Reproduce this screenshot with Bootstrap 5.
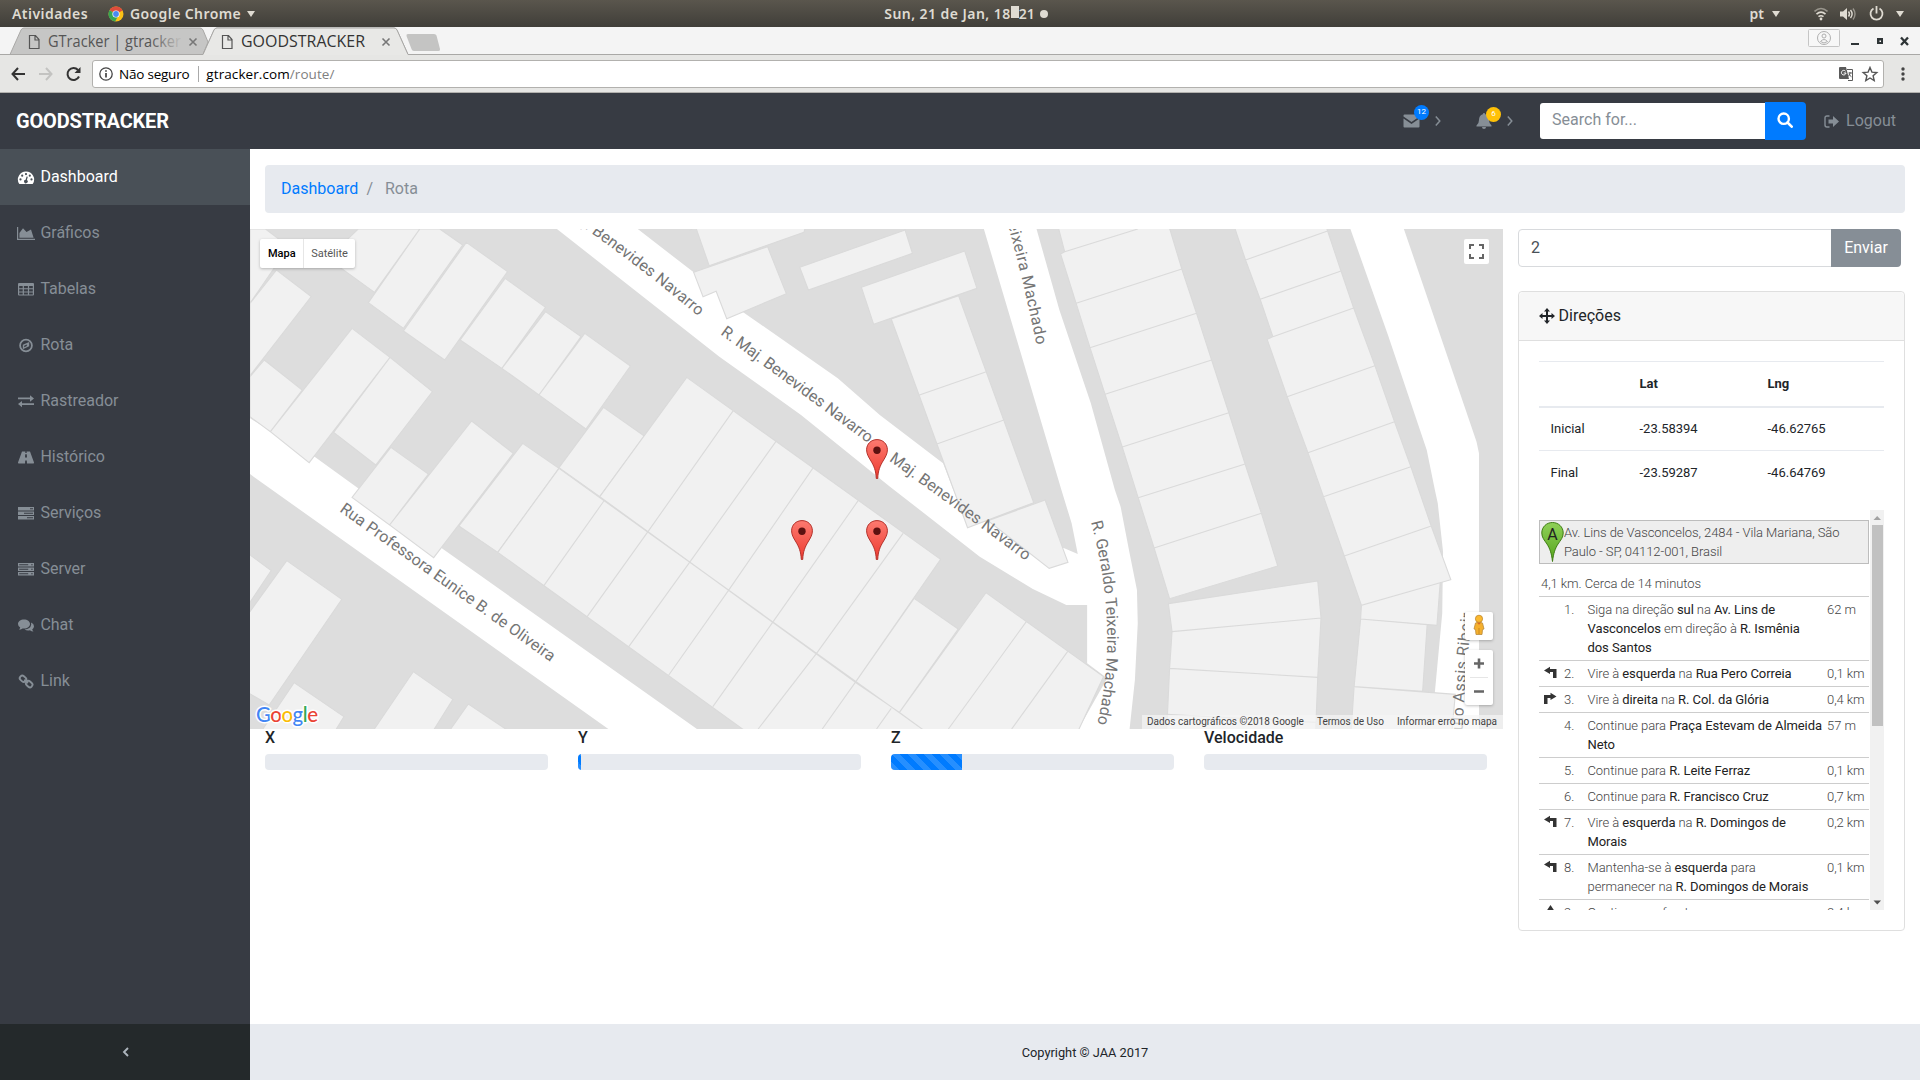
<!DOCTYPE html>
<html lang="pt">
<head>
<meta charset="utf-8">
<title>GOODSTRACKER</title>
<link rel="stylesheet" href="https://cdn.jsdelivr.net/npm/bootstrap@5.3.0/dist/css/bootstrap.min.css">
<style>
:root{--dark:#373b43;--muted:#868e96;--soft:#e7eaef;--blue:#007bff}
body{font-family:Roboto,"Liberation Sans",sans-serif;font-size:16px;line-height:1.5;color:#212529;height:1080px;overflow:hidden;background:#fff}
svg{display:block;flex:none}
.ico{width:18px;height:16px;fill:currentColor}
/* desktop panel */
.panel{height:27px;background:linear-gradient(#5a564d,#403e39);color:#dfdbd2;font:600 14px/27px "Noto Sans","Open Sans",sans-serif;padding:0 12px}
.panel>div{height:27px}
.tri{width:0;height:0;border:4.5px solid transparent;border-top:6px solid #dfdbd2;border-bottom:0}
.colonbox{width:8px;height:12px;background:#dfdbd2;margin-bottom:4px}
.tabstrip{height:28px;background:#f4f4f4}
.tabstrip text{font-family:"Open Sans","Noto Sans",sans-serif;font-size:15.5px}
.toolbar{height:38px;background:#e6e6e4;border-bottom:1px solid #b2b1ae;padding:5px 10px 5px 11px}
.omni{height:28px;background:#fff;border:1px solid #b2b1ae;border-radius:3px;font:13.5px/26px "Open Sans","Noto Sans",sans-serif;color:#000}
/* application shell */
.topnav{height:56px;background:var(--dark);color:var(--muted);padding:0 24px 0 16px}
.brandname{font-size:20px;font-weight:700;color:#fff;letter-spacing:-.17px}
.pill{position:absolute;top:-9px;left:11px;width:15px;height:15px;border-radius:50%;color:#fff;font-size:8px;line-height:14px;text-align:center}
.searchbox{width:266px}
.searchbox .form-control{height:36px;margin:1px 0;border:0;border-radius:3px 0 0 3px;padding:0 12px 3px;box-shadow:none}
.searchbox .form-control::placeholder{color:#868e96}
.searchbox .btn{width:41px;height:38px;background:var(--blue);color:#fff;border:0;border-radius:0 4px 4px 0;padding:0 2px 2px 0}
.sidebar{width:250px;background:var(--dark)}
.sidebar .nav-link{height:56px;padding:0 0 1px 17px;color:var(--muted);gap:5.4px}
.sidebar .nav-link.active{background:#495057;color:#fff}
.toggler{height:56px;background:#24292b;color:#adb5bd}
.crumbs{height:48px;margin:16px 15px;padding:0 16px;background:var(--soft);border-radius:4px;color:var(--muted)}
.crumbs a{color:var(--blue);text-decoration:none}
.mapcol{width:1253px}
.sidecol{width:402px;padding:0 15px}
.mapbox{height:500px;background:#ddd}
.mapbox text{font-family:Roboto,sans-serif;font-size:16px;fill:#757575}
.ctl{position:absolute;background:#fff;border-radius:2px;box-shadow:0 1px 3px rgba(0,0,0,.25)}
.maptypes{left:10px;top:10px;height:29px;font-size:11px;line-height:29px;color:#565656}
.maptypes span{padding:0 7.5px 0 8px}
.maptypes span:first-child{color:#000;font-weight:500;border-right:1px solid #e6e6e6}
.maptypes span:last-child{padding-left:7px}
.fullscr{right:14px;top:10px;width:25px;height:25px;box-shadow:none}
.pegman{right:10px;bottom:89px;width:28px;height:28px}
.zoomer{right:10px;bottom:24px;width:28px;height:55px}
.legal{position:absolute;right:0;bottom:0;height:14px;background:rgba(245,245,245,.7);font-size:10px;line-height:13px;color:#444;padding:0 6px 0 5px;gap:13px;white-space:nowrap}
.gauge{padding:0 15px}
.gauge h6{font-size:16px;line-height:17.6px;margin-bottom:7.4px}
.progress{height:16px;background:var(--soft);border-radius:4px}
.progress-bar{background-color:var(--blue)}
.sendbox{height:38px;width:383px;margin-bottom:24px}
.sendbox .form-control{border:1px solid #d8dadd;border-radius:4px 0 0 4px;color:#495057;padding:0 12px 2px;height:38px}
.sendbox .btn{background:#868e96;color:#fff;border:0;border-radius:0 4px 4px 0;width:70px;padding:0}
.routecard{height:640px;border:1px solid #dfdfdf;border-radius:4px;width:387px}
.routecard .card-header{height:49px;background:#f7f7f7;border-color:#dfdfdf;padding:0 20px 1px 19.5px;gap:4px}
.routecard .card-body{padding:20px 20px 19px}
.coords{font-size:13px;margin:0 0 15px;color:#212529;width:345px}
.coords td,.coords th{height:44px;padding:0 0 0 11.5px;vertical-align:middle;border:0;border-top:1px solid var(--soft);background:none}
.coords thead th{border-bottom:2px solid var(--soft);height:45px;font-weight:700}
.coords tbody tr:first-child td{border-top:0}
.guide{height:400px;font-size:13px;font-weight:300;line-height:19px;color:#444;letter-spacing:-.07px}
.guide b{font-weight:400;color:#222}
.steps{width:330px;margin-right:1px}
.origin{margin-top:10px;height:44px;background:#eee;border:1px solid #bdbdbd;padding:2px 0 0 1px;gap:0}
.origin svg{margin-top:-1px}
.total{padding:10px 2px 2px;height:32px}
.leg{border-top:1px solid #cdcdcd;padding:3px 0}
.leg .turn{width:24px;padding:2px 0 0 5px;fill:#333}
.leg .num{width:24.5px;padding-left:1px}
.leg .dist{width:42px;white-space:nowrap}
.leg .say{width:239.5px;padding-right:3px}
.bar{width:14px;background:#f1f1f1}
.thumb{width:11px;height:201px;background:#c1c1c1}
.pagefoot{height:56px;background:var(--soft);font-size:12.8px;padding-top:2px}
</style>
<script src="https://cdn.jsdelivr.net/npm/bootstrap@5.3.0/dist/js/bootstrap.bundle.min.js"></script>
</head>
<body class="d-flex flex-column">
<svg width="0" height="0" class="position-absolute">
<defs>
<linearGradient id="pinfill" x1="0" y1="0" x2="0" y2="1"><stop offset="0" stop-color="#fc7a70"/><stop offset="1" stop-color="#ee3b30"/></linearGradient>
<linearGradient id="greenfill" x1="0" y1="0" x2="0" y2="1"><stop offset="0" stop-color="#8fd058"/><stop offset="1" stop-color="#55a51c"/></linearGradient>
<linearGradient id="fade" x1="0" x2="1"><stop offset="0" stop-color="#c6c6c5" stop-opacity="0"/><stop offset="1" stop-color="#c6c6c5"/></linearGradient>
<symbol id="pin" viewBox="0 0 22 40"><path d="M11 .6C5 .6.6 5 .6 10.800c0 4 1.800 7 4.400 11.200 3 5 4.900 9.500 5.300 17.500h1.400c.4-8 2.300-12.500 5.300-17.500 2.600-4.200 4.400-7.200 4.400-11.200C21.400 5 17 .6 11 .6z" fill="url(#pinfill)" stroke="#b3312a"/><circle cx="11" cy="11.300" r="3.700" fill="#5c1110"/></symbol>
<symbol id="left" viewBox="0 0 14 14"><path d="M0 4.500 6 .8v2.200h6.500V12H9V6H6v2z"/></symbol>
<symbol id="right" viewBox="0 0 14 14"><path d="M12.500 4.500 6.500.8v2.200H0V12h3.500V6h3v2z"/></symbol>
<symbol id="ahead" viewBox="0 0 14 14"><path d="M6.500 0 10.500 6H8v8H5V6H2.500z"/></symbol>
</defs></svg>

<div class="panel d-flex align-items-center position-relative">
  <div class="d-flex align-items-center"><span style="letter-spacing:.45px">Atividades</span>
    <svg width="16" height="16" viewBox="0 0 16 16" style="margin:0 6px 0 20px"><circle cx="8" cy="8" r="7.500" fill="#fbc116"/><path d="M8 8 1.500 4.200A7.500 7.500 0 0 1 14.600 4.500z" fill="#de4c3c"/><path d="M8 8 1.500 4.200A7.500 7.500 0 0 0 7.200 15.500L10 10z" fill="#37a554"/><circle cx="8" cy="8" r="3.600" fill="#fff"/><circle cx="8" cy="8" r="2.900" fill="#4a89f0"/></svg>
    <span style="letter-spacing:.4px">Google Chrome</span><i class="tri" style="margin-left:6px"></i></div>
  <div class="position-absolute top-0 start-0 w-100 d-flex justify-content-center align-items-center" style="padding-left:12px"><span style="letter-spacing:.45px">Sun, 21 de Jan, 18</span><i class="colonbox"></i><span>21</span><svg width="8" height="8" style="margin-left:5px"><circle cx="4" cy="4" r="4" fill="#dfdbd2"/></svg></div>
  <div class="d-flex align-items-center ms-auto"><span>pt</span><i class="tri" style="margin:0 34px 0 8px"></i>
    <svg width="14" height="14" viewBox="0 0 14 14" fill="none" stroke="#dfdbd2" stroke-width="1.600"><path d="M.5 4.500q6.500-6 13 0" opacity=".5"/><path d="M2.500 7.200q4.500-4 9 0M4.500 9.700q2.500-2 5 0"/><circle cx="7" cy="12" r="1.400" fill="#dfdbd2" stroke="none"/></svg>
    <svg width="16" height="14" viewBox="0 0 16 14" style="margin:0 13px 0 12px" fill="none" stroke="#dfdbd2" stroke-width="1.400"><path d="M0 4.500h3l4-3.500v12L3 9.500H0z" fill="#dfdbd2" stroke="none"/><path d="M8.500 4.500q2 2.500 0 5M10.500 3q3.200 4 0 8"/><path d="M13 1.500q4 5.500 0 11" opacity=".5"/></svg>
    <svg width="15" height="15" viewBox="0 0 15 15" fill="none" stroke="#dfdbd2" stroke-width="1.800"><path d="M4.500 2.500a6 6 0 1 0 6 0M7.500 0v7.500"/></svg><i class="tri" style="margin:0 4px 0 12px"></i></div>
</div>

<div class="tabstrip">
<svg width="1920" height="28" viewBox="0 27 1920 28">
  <path d="M10 54.500 21 30q1-2 3-2H200q2 0 3 2L208 42 203 54.500z" fill="#c6c6c5" stroke="#a9a8a6"/>
  <path d="M0 54.500H203L214 30q1-2 3-2H394q2 0 3 2L408 54.500H1920" fill="none" stroke="#a9a8a6"/>
  <path d="M203 55 214 30q1-2 3-2H394q2 0 3 2L408 55z" fill="#e8e8e6"/>
  <path d="M203 54.500 214 30q1-2 3-2H394q2 0 3 2L408 54.500" fill="none" stroke="#a9a8a6"/>
  <path d="M408 34H434q2 0 2.500 1.500L440 49q.5 2-1.500 2H414q-2 0-2.500-2L406.500 36q-.5-2 1.500-2z" fill="#c4c4c3"/>
  <g fill="none" stroke="#555" stroke-width="1.200"><path d="M29.500 35.500h6l3.500 4v9h-9.500zM35 35.500v4.500h4M222.500 35.500h6l3.500 4v9h-9.500zM228 35.500v4.500h4"/><path d="M189.500 38.500l7 7m0-7-7 7M382.500 38.500l7 7m0-7-7 7" stroke="#777" stroke-width="1.600"/></g>
  <text x="48" y="47" fill="#555" textLength="133" lengthAdjust="spacingAndGlyphs">GTracker | gtracker</text>
  <rect x="150" y="31" width="33" height="21" fill="url(#fade)"/>
  <text x="241" y="47" fill="#333" textLength="124" lengthAdjust="spacingAndGlyphs">GOODSTRACKER</text>
  <rect x="1808.500" y="29.500" width="31" height="17" fill="#f7f7f7" stroke="#c5c5c5" rx="1"/>
  <g fill="none" stroke="#b0b0b0"><circle cx="1824" cy="38" r="6.500"/><circle cx="1824" cy="36" r="2"/><path d="M1820.500 41.500q3.500-4 7 0-3.500 3-7 0z"/></g>
  <path d="M1851 43h8v2h-8zM1877 38h6v6h-6z" fill="#2e3436"/><path d="M1879.500 40.500h1.500v1.500h-1.500z" fill="#fff"/>
  <path d="m1901 37.500 7 7.500m0-7.500-7 7.500" stroke="#2e3436" stroke-width="2.300"/>
</svg></div>

<div class="toolbar d-flex align-items-center">
  <svg width="70" height="16" viewBox="0 0 70 16" fill="none" stroke-width="2"><path d="M7 2 1.500 8 7 14M1.500 8H14" stroke="#333"/><path d="M35 2l5.500 6-5.500 6M40.500 8H28" stroke="#c3c3c1"/><path d="M68 10.500A6 6 0 1 1 67 4" stroke="#333"/><path d="M69.500 1v6h-6z" fill="#333"/></svg>
  <div class="omni d-flex align-items-center flex-grow-1" style="margin:0 12px 0 11px;padding:0 6px">
    <svg width="14" height="14" viewBox="0 0 14 14" fill="none" stroke="#444" stroke-width="1.300"><circle cx="7" cy="7" r="6.200"/><path d="M7 6v4.500M7 3.200v1.600" stroke-width="1.700"/></svg>
    <span style="margin-left:6px;letter-spacing:-.22px">Não seguro</span><i style="width:1px;height:16px;background:#aaa;margin:0 7px 0 9px"></i><span style="letter-spacing:.08px">gtracker.com<span style="color:#808080">/route/</span></span>
    <svg class="ms-auto" width="14" height="14" viewBox="0 0 14 14"><path d="M0 1q0-1 1-1h6l3 12H1q-1 0-1-1z" fill="#5a5a5a"/><path d="M6.500 4.200A2.300 2.300 0 1 0 7 6H4.700" fill="none" stroke="#fff"/><path d="M8 2.500h5.500v11H9M9.500 6h3.500M11 5v1q0 2-2 3.500M10 7q1 2 2.500 2.800" fill="none" stroke="#5a5a5a"/></svg>
    <svg class="ms-2" style="margin-right:-2px" width="18" height="16" viewBox="0 0 18 16"><path d="m9 1.500 1.900 4.600 4.900.4-3.700 3.200 1.100 4.900L9 12l-4.200 2.600 1.100-4.900L2.200 6.500l4.900-.4z" fill="none" stroke="#555" stroke-width="1.400"/></svg>
  </div>
  <svg width="14" height="14" viewBox="0 0 14 14" fill="#444"><circle cx="7" cy="2" r="1.700"/><circle cx="7" cy="7" r="1.700"/><circle cx="7" cy="12" r="1.700"/></svg>
</div>

<nav class="topnav d-flex align-items-center">
  <span class="brandname me-auto">GOODSTRACKER</span>
  <div class="position-relative d-flex align-items-center" style="margin-right:35px">
    <svg width="17" height="14" viewBox="0 0 17 14" fill="currentColor"><path d="M.5 1.500Q.5.500 1.500.500h14q1 0 1 1v1L8.500 8 .5 2.500zM.5 4.500 8.500 10l8-5.500v8q0 1-1 1h-14q-1 0-1-1z"/></svg>
    <span class="pill" style="background:#007bff">12</span>
    <svg style="margin-left:15px" width="6" height="10" fill="none" stroke="currentColor" stroke-width="1.500"><path d="m.8.500 4 4.500-4 4.500"/></svg></div>
  <div class="position-relative d-flex align-items-center" style="margin-right:27px">
    <svg width="16" height="16" viewBox="0 0 16 16" fill="currentColor"><path d="M8 0q1 0 1.200 1.200Q13 2.200 13 7q0 3.500 2.500 5.500v1H.5v-1Q3 10.500 3 7q0-4.800 3.800-5.800Q7 0 8 0zM6 14h4q0 2-2 2t-2-2z"/></svg>
    <span class="pill" style="background:#ffc107;left:10px;top:-6px">6</span>
    <svg style="margin-left:15px" width="6" height="10" fill="none" stroke="currentColor" stroke-width="1.500"><path d="m.8.500 4 4.500-4 4.500"/></svg></div>
  <div class="input-group searchbox flex-nowrap" style="margin-right:18px"><input class="form-control" placeholder="Search for..."><button class="btn d-flex align-items-center justify-content-center"><svg width="16" height="16" viewBox="0 0 16 16" fill="none" stroke="currentColor"><circle cx="6.700" cy="6.700" r="5.200" stroke-width="2.400"/><path d="m10.500 10.500 4.200 4.200" stroke-width="2.600" stroke-linecap="round"/></svg></button></div>
  <svg width="15" height="13" viewBox="0 0 15 13" class="me-2" style="margin-right:7px!important"><path d="M5.500 1H3Q1 1 1 3v7q0 2 2 2h2.500" fill="none" stroke="currentColor" stroke-width="1.400"/><path d="M4.500 4.500H9V1l6 5.500L9 12V8.500H4.500z" fill="currentColor"/></svg><span>Logout</span>
</nav>

<div class="d-flex flex-grow-1">
  <aside class="sidebar d-flex flex-column">
    <nav class="nav flex-column flex-nowrap flex-grow-1">
      <a class="nav-link active d-flex align-items-center"><svg class="ico" viewBox="0 0 18 16"><path fill-rule="evenodd" d="M9 2.500a8 8 0 0 1 7 12q-.3.500-1 .500H3q-.7 0-1-.5a8 8 0 0 1 7-12zM3.500 9.300a1.100 1.100 0 1 0 0 2.200 1.100 1.100 0 0 0 0-2.200zM5.200 5.600a1.100 1.100 0 1 0 0 2.200 1.100 1.100 0 0 0 0-2.200zM9 4a1.100 1.100 0 1 0 0 2.200A1.100 1.100 0 0 0 9 4zm3.800 1.600a1.100 1.100 0 1 0 0 2.200 1.100 1.100 0 0 0 0-2.200zm1.700 3.700a1.100 1.100 0 1 0 0 2.200 1.100 1.100 0 0 0 0-2.200zM9.600 7.500l-1 3.200a1.800 1.800 0 1 0 1.300.3l.9-3.300z"/></svg>Dashboard</a>
      <a class="nav-link d-flex align-items-center"><svg class="ico" viewBox="0 0 18 16"><path d="M0 2h1.200v11.800H18V15H0zM2.400 12.800V8L6 3.300 9.500 7 14 4.500l2.600 8.300z"/></svg>Gráficos</a>
      <a class="nav-link d-flex align-items-center"><svg class="ico" viewBox="0 0 18 16"><path fill-rule="evenodd" d="M2 2h14q1 0 1 1v10.500q0 1-1 1H2q-1 0-1-1V3q0-1 1-1zm.2 3v2.300h3.500V5zm4.700 0v2.300h4V5zm5.200 0v2.300h3.700V5zM2.200 8.300v2.200h3.500V8.300zm4.700 0v2.200h4V8.300zm5.200 0v2.200h3.700V8.300zM2.200 11.500v2h3.500v-2zm4.700 0v2h4v-2zm5.200 0v2h3.700v-2z"/></svg>Tabelas</a>
      <a class="nav-link d-flex align-items-center"><svg class="ico" viewBox="0 0 18 16"><circle cx="9" cy="8.500" r="5.900" fill="none" stroke="currentColor" stroke-width="1.800"/><path fill-rule="evenodd" d="M12.200 5v4.300l-6.400 3V7.800zM7.200 8.700v1.600L9.800 9V7.500z"/></svg>Rota</a>
      <a class="nav-link d-flex align-items-center"><svg class="ico" viewBox="0 0 18 16"><path d="M1 4.500h12V2.200l4 3.300-4 3.200V6.300H1zM17 10.200v1.800H5v2.300L1 11.100 5 8v2.200z"/></svg>Rastreador</a>
      <a class="nav-link d-flex align-items-center"><svg class="ico" viewBox="0 0 18 16"><path fill-rule="evenodd" d="M5 2.500h3.400L8.300 4h1.400l-.1-1.500H13L17 13.500q.3 1-.8 1H10l-.2-3H8.200l-.2 3H1.800q-1 0-.8-1zM8.200 5.200 8 8.500h2l-.2-3.300z"/></svg>Histórico</a>
      <a class="nav-link d-flex align-items-center"><svg class="ico" viewBox="0 0 18 16"><path fill-rule="evenodd" d="M1 2h16v3.500H1zm12 1.200v1.100h3V3.200zM1 6.500h16V10H1zm6 1.200v1.100h9V7.700zM1 11h16v3.500H1zm9 1.200v1.100h6v-1.100z"/></svg>Serviços</a>
      <a class="nav-link d-flex align-items-center"><svg class="ico" viewBox="0 0 18 16"><path fill-rule="evenodd" d="M1 2h16v3.500H1zm1.200 1.200v1.100h9V3.200zm12 0v1.100h1.500V3.200zM1 6.500h16V10H1zm1.200 1.200v1.100h9V7.700zm12 0v1.100h1.500V7.700zM1 11h16v3.500H1zm1.200 1.200v1.100h9v-1.100zm12 0v1.100h1.500v-1.100z"/></svg>Server</a>
      <a class="nav-link d-flex align-items-center"><svg class="ico" viewBox="0 0 18 16"><path d="M7 2.500c3.400 0 6 2 6 4.500s-2.600 4.500-6 4.500l-1.400-.1Q3.800 12.600 2 12.600q1.200-1 1.200-2.100Q1 9.200 1 7c0-2.500 2.600-4.500 6-4.500zM14 5.500q3 1.300 3 3.700 0 1.900-1.800 3.200.2 1.100 1.300 2-2 0-3.600-1.200-3.100.6-5.300-.7Q13.500 12 14.200 7.500z"/></svg>Chat</a>
      <a class="nav-link d-flex align-items-center"><svg class="ico" viewBox="0 0 18 16" style="fill:none;stroke:currentColor;stroke-width:1.900"><rect x="-3.200" y="-2.300" width="6.800" height="5" rx="2.300" transform="translate(6 5.500) rotate(42)"/><rect x="-3.600" y="-2.600" width="6.800" height="5" rx="2.300" transform="translate(12.300 11.300) rotate(42)"/><path d="m7.300 6.800 3.600 3.300"/></svg>Link</a>
    </nav>
    <div class="toggler d-flex align-items-center justify-content-center"><svg width="7" height="10" fill="none" stroke="currentColor" stroke-width="1.900"><path d="M6 1 2 5l4 4"/></svg></div>
  </aside>

  <div class="d-flex flex-column flex-grow-1">
    <div class="crumbs d-flex align-items-center"><a href="#">Dashboard</a><span style="margin:0 12px 0 8px">/</span><span>Rota</span></div>
    <div class="d-flex flex-grow-1">
      <div class="mapcol">
        <div class="mapbox position-relative overflow-hidden">
<svg width="1253" height="500" viewBox="0 0 1253 500">
<g transform="scale(.408163 .333333) translate(0 -27)">
<g fill="#fff">
<path d="M752 27 1150 410 1350 585 1568 800 1788 1010 1918 1107 2000 1155H2051V1330L2100 1375 2030 1527H2155L2168 1380 2175 1210 2173 1110 2155 1000 2133 860 2119 810 2060 550 1983 270 1927 27H1798L1988 810 2013 910 2028 1002 1995 985 1808 902 1758 920 1698 730 1543 585 1440 475 1210 278 1087 157 950 27z"/>
<path d="M2696 27 2788 345 2883 690 2903 810 2910 850 2923 995 2921 1180 2903 1416 2930 1527H3011V700L3005 665 2888 245 2827 27z"/>
<path d="M0 595 160 712 265 805 470 985 1095 1527H878L20 780 0 762z"/>
</g>
<g fill="#f1f1f1" stroke="#dadada" stroke-width="1.100">
<path vector-effect="non-scaling-stroke" d="M0 27H38L95 80 0 250zM65 150 150 230 0 467V250zM35 420 128 510 50 635 0 590V470zM250 325 343 412 145 728 50 635zM343 412 447 515 308 735 205 637zM345 682 437 762 342 915 250 832zM543 603 645 700 450 1013 342 915zM668 670 757 745 607 997 512 918zM265 27H416L305 217 190 115zM416 27H465L521 75 376 325 290 248zM530 67 631 155 477 420 376 333zM625 175 724 262 617 445 515 360zM724 275 811 350 708 525 617 445zM820 340 932 438 823 627 708 525zM866 562 966 648 857 830 757 743z"/>
<path vector-effect="non-scaling-stroke" d="M1070 472 1692 1018 1483 1387 857 830zM1184 572 975 935M1290 662 1077 1027M1380 743 1172 1112M1490 842 1280 1208M1600 940 1388 1300M1627 1135 1735 1227 1591 1477 1483 1387zM1803 1118 2091 1370 2030 1530H1650L1591 1477zM1902 1205 1711 1527M2003 1295 1866 1527M757 745 1650 1530H1210L607 997zM867 843 720 1097M975 935 826 1190M1077 1027 928 1280M1172 1112 1026 1365M1280 1208 1134 1460M1388 1300 1245 1527M1483 1387 1402 1527M1571 1465 1535 1527"/>
<path vector-effect="non-scaling-stroke" d="M-2 1003 52 1052-2 1150zM90 1022 225 1138 47 1455-2 1420V1178zM108 1388 230 1490 210 1530H30zM400 1355 497 1438 450 1530H303zM535 1452 630 1530H490z"/>
<path vector-effect="non-scaling-stroke" d="M1078 31 1086 24M1093 25H1360L1357 37 1125 137zM1087 157 1268 80 1314 221 1168 296 1142 214 1110 230zM1347 142 1605 30 1623 100 1368 210zM1498 202 1751 93 1781 205 1528 313zM1571 297 1736 227 1920 848 1758 923zM1640 525 1804 455M1683 672 1847 600M1808 902 1948 840 2004 1027 1958 1045z"/>
<path vector-effect="non-scaling-stroke" d="M1981 25H2253L2283 147 2319 280 2356 420 2398 578 2438 732 2478 880 2518 1038 2253 1136 2215 984 2176 833 2137 681 2095 523 2058 383 2024 250 1986 102 1996 95zM1996 95 2175 27M2024 250 2283 147M2058 383 2319 280M2095 523 2356 420M2137 681 2398 578M2176 833 2438 732M2215 984 2478 880M2250 1151 2616 1083 2624 1194 2616 1372 2611 1530H2246L2253 1345 2259 1235zM2259 1235 2624 1194M2253 1345 2616 1372M2246 1483 2611 1507"/>
<path vector-effect="non-scaling-stroke" d="M2413 25H2638L2673 153 2704 264 2756 437 2804 605 2844 740 2894 918 2942 1079 2723 1156 2681 1008 2630 830 2592 698 2541 530 2492 358 2506 350 2475 238 2439 120zM2439 120 2640 33M2475 238 2673 153M2506 350 2704 264M2541 530 2756 437M2592 698 2804 605M2630 830 2844 740M2681 1008 2894 918M2723 1156 2916 1088 2908 1216 2721 1197zM2721 1197 2884 1214 2873 1414 2705 1400zM2705 1400 2953 1423 2945 1530H2698z"/>
</g></g>
<defs>
<path id="st1" d="M297-27 Q374 25 448 87"/><path id="st2" d="M470 105 Q547 161 619 215"/><path id="st3" d="M624 221 Q701 276 777 333"/>
<path id="st4" d="M730-93 Q763 0 787 118"/><path id="st5" d="M841 293 Q870 400 847 496"/><path id="st6" d="M1211 541 Q1213 461 1223 380"/><path id="st7" d="M89 282 L302 434"/>
</defs>
<text><textPath href="#st1" textLength="190">R. Maj. Benevides Navarro</textPath></text>
<text><textPath href="#st2" textLength="184">R. Maj. Benevides Navarro</textPath></text>
<text><textPath href="#st3" textLength="188">R. Maj. Benevides Navarro</textPath></text>
<text><textPath href="#st4" textLength="217">R. Geraldo Teixeira Machado</textPath></text>
<text><textPath href="#st5" textLength="204">R. Geraldo Teixeira Machado</textPath></text>
<text><textPath href="#st6" textLength="157">R. Paulo Assis Ribeir</textPath></text>
<text><textPath href="#st7" textLength="260">Rua Professora Eunice B. de Oliveira</textPath></text>
<use href="#pin" x="616" y="210" width="22" height="40"/><use href="#pin" x="541" y="291" width="22" height="40"/><use href="#pin" x="616" y="291" width="22" height="40"/>
<text x="6" y="493" style="font-family:Lato,sans-serif;font-size:20.500px;font-weight:500;fill:#4285f4;stroke:#fff;stroke-width:3px;paint-order:stroke;stroke-linejoin:round" textLength="62"><tspan>G</tspan><tspan style="fill:#ea4335">o</tspan><tspan style="fill:#fbbc05">o</tspan><tspan>g</tspan><tspan style="fill:#34a853">l</tspan><tspan style="fill:#ea4335">e</tspan></text>
</svg>
          <div class="ctl maptypes d-flex"><span>Mapa</span><span>Satélite</span></div>
          <div class="ctl fullscr"><svg width="25" height="25" fill="none" stroke="#666" stroke-width="2"><path d="M6 10V6h4M15 6h4v4M19 15v4h-4M10 19H6v-4"/></svg></div>
          <div class="ctl pegman"><svg width="28" height="28"><path d="M10.500 11q3.500-2 7 0l1.500 6-1.500.5-.5 5h-6l-.5-5-1.500-.5z" fill="#f5b02e" stroke="#b98a3a" stroke-width=".8"/><path d="M14 16v6" stroke="#c98a1f"/><circle cx="14" cy="6.800" r="3.600" fill="#fbb930" stroke="#c0872a" stroke-width=".8"/><path d="m12 10.800 2 2 2-2z" fill="#d9682a"/></svg></div>
          <div class="ctl zoomer"><svg width="28" height="55" stroke="#666" stroke-width="2.600"><path d="M9 13.500h10M14 8.500v10M9 41.500h10"/><path d="M5 27.500h18" stroke="#e6e6e6" stroke-width="1"/></svg></div>
          <div class="legal d-flex"><span>Dados cartográficos ©2018 Google</span><span>Termos de Uso</span><span>Informar erro no mapa</span></div>
        </div>
        <div class="row g-0" style="margin-right:1px">
          <div class="col-3 gauge"><h6>X</h6><div class="progress"></div></div>
          <div class="col-3 gauge"><h6>Y</h6><div class="progress"><div class="progress-bar progress-bar-striped" style="width:1%"></div></div></div>
          <div class="col-3 gauge"><h6>Z</h6><div class="progress"><div class="progress-bar progress-bar-striped" style="width:25%"></div></div></div>
          <div class="col-3 gauge"><h6>Velocidade</h6><div class="progress"></div></div>
        </div>
      </div>
      <div class="sidecol">
        <div class="input-group sendbox flex-nowrap"><input class="form-control" value="2"><button class="btn">Enviar</button></div>
        <div class="card routecard">
          <div class="card-header d-flex align-items-center"><svg width="16" height="16" viewBox="0 0 16 16"><path d="m8 0 3 3.500H9V7h3.500V5L16 8l-3.500 3V9H9v3.500h2L8 16l-3-3.500h2V9H3.500v2L0 8l3.500-3v2H7V3.500H5z" fill="#212529"/></svg>Direções</div>
          <div class="card-body">
            <table class="coords"><colgroup><col style="width:89px"><col style="width:128px"><col></colgroup>
              <thead><tr><th></th><th>Lat</th><th>Lng</th></tr></thead>
              <tbody><tr><td>Inicial</td><td>-23.58394</td><td>-46.62765</td></tr><tr><td>Final</td><td>-23.59287</td><td>-46.64769</td></tr></tbody></table>
            <div class="guide d-flex overflow-hidden">
              <div class="steps">
                <div class="origin d-flex"><svg width="23" height="40" viewBox="0 0 23 40"><path d="M11.500.5C5.500.5.8 5 .8 11c0 4.500 2.500 7 5.200 11 2.800 4.500 4.500 9 5.500 17.500 1-8.500 2.700-13 5.500-17.500 2.700-4 5.200-6.500 5.200-11C22.200 5 17.500.5 11.500.5z" fill="url(#greenfill)" stroke="#3f7d14"/><text x="11.500" y="17.500" text-anchor="middle" font-family="Roboto" font-size="16" font-weight="400" fill="#222">A</text></svg><div>Av. Lins de Vasconcelos, 2484 - Vila Mariana, São Paulo - SP, 04112-001, Brasil</div></div>
                <div class="total">4,1 km. Cerca de 14 minutos</div>
                <div class="leg d-flex"><div class="turn"></div><div class="num">1.</div><div class="say">Siga na direção <b>sul</b> na <b>Av. Lins de Vasconcelos</b> em direção à <b>R. Ismênia dos Santos</b></div><div class="dist">62 m</div></div>
                <div class="leg d-flex"><div class="turn"><svg width="14" height="14"><use href="#left"/></svg></div><div class="num">2.</div><div class="say">Vire à <b>esquerda</b> na <b>Rua Pero Correia</b></div><div class="dist">0,1 km</div></div>
                <div class="leg d-flex"><div class="turn"><svg width="14" height="14"><use href="#right"/></svg></div><div class="num">3.</div><div class="say">Vire à <b>direita</b> na <b>R. Col. da Glória</b></div><div class="dist">0,4 km</div></div>
                <div class="leg d-flex"><div class="turn"></div><div class="num">4.</div><div class="say">Continue para <b>Praça Estevam de Almeida Neto</b></div><div class="dist">57 m</div></div>
                <div class="leg d-flex"><div class="turn"></div><div class="num">5.</div><div class="say">Continue para <b>R. Leite Ferraz</b></div><div class="dist">0,1 km</div></div>
                <div class="leg d-flex"><div class="turn"></div><div class="num">6.</div><div class="say">Continue para <b>R. Francisco Cruz</b></div><div class="dist">0,7 km</div></div>
                <div class="leg d-flex"><div class="turn"><svg width="14" height="14"><use href="#left"/></svg></div><div class="num">7.</div><div class="say">Vire à <b>esquerda</b> na <b>R. Domingos de Morais</b></div><div class="dist">0,2 km</div></div>
                <div class="leg d-flex"><div class="turn"><svg width="14" height="14"><use href="#left"/></svg></div><div class="num">8.</div><div class="say">Mantenha-se à <b>esquerda</b> para permanecer na <b>R. Domingos de Morais</b></div><div class="dist">0,1 km</div></div>
                <div class="leg d-flex"><div class="turn"><svg width="14" height="14"><use href="#ahead"/></svg></div><div class="num">9.</div><div class="say">Continue em frente</div><div class="dist">0,4 km</div></div>
              </div>
              <div class="bar d-flex flex-column align-items-center"><svg width="14" height="15"><path d="m3.500 10 3.700-4 3.800 4z" fill="#a3a3a3"/></svg><div class="thumb"></div><svg class="mt-auto" width="14" height="15"><path d="m3.500 5.500h7.500l-3.700 4z" fill="#505050"/></svg></div>
            </div>
          </div>
        </div>
      </div>
    </div>
    <footer class="pagefoot d-flex align-items-center justify-content-center">Copyright © JAA 2017</footer>
  </div>
</div>
</body>
</html>
